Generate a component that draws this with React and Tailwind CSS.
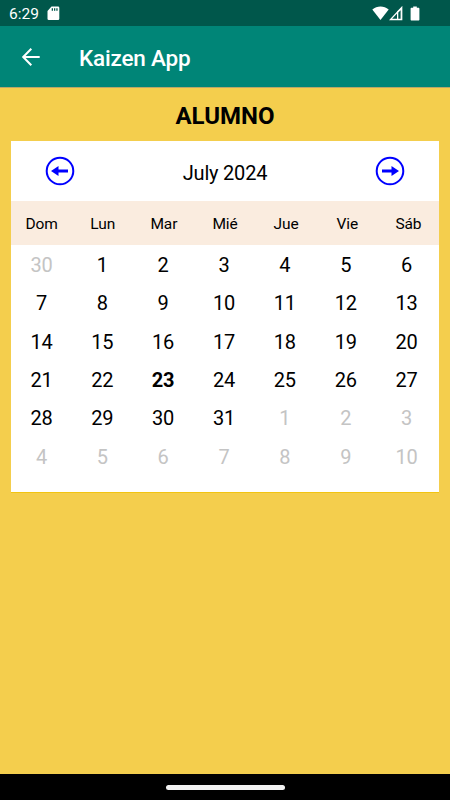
import React, { useState } from "react";

const weekDays = ["Dom", "Lun", "Mar", "Mié", "Jue", "Vie", "Sáb"];

const getMonthDays = (year, month) => {
  const firstWeekDay = new Date(year, month, 1).getDay();

  return Array.from({ length: 42 }, (_, index) => {
    const date = new Date(year, month, index - firstWeekDay + 1);
    return { number: date.getDate(), isOutside: date.getMonth() !== month };
  });
};

const StatusBar = () => {
  return (
    <div className="flex h-[26px] shrink-0 items-center bg-[#00574b] pl-[9px] pr-[30px] text-white">
      <p className="pt-[3px] text-[15.5px] leading-none">6:29</p>
      <svg className="ml-[8px] h-[15px] w-[13px]" viewBox="0 0 13 15" fill="currentColor">
        <path
          fillRule="evenodd"
          d="M4.5.5H11a1.3 1.3 0 0 1 1.3 1.3v11a1.3 1.3 0 0 1-1.3 1.3H1.8a1.3 1.3 0 0 1-1.3-1.3V5zM4.7 2.300v2.500H6V2.300zM7 2.300v2.500h1.300V2.300zM9.300 2.300v2.500h1.300V2.300z"
        />
      </svg>
      <div className="ml-auto flex items-center">
        <svg className="h-[15px] w-[17px]" viewBox="0 0 17 15" fill="currentColor">
          <path d="M.3 3.600C5-.4 12-.4 16.700 3.600L8.500 14z" />
        </svg>
        <svg className="h-[15px] w-[14px]" viewBox="0 0 14 15">
          <path d="M12.700 1.500v12H1.500z" fill="none" stroke="currentColor" strokeWidth="1.300" />
          <path d="M8 5.500l4.500-4V13.500H8z" fill="currentColor" />
          <path d="M9.300 6.500l2.300-2.300v8.600H9.300z" fill="#00574b" />
        </svg>
        <svg className="ml-[7px] h-[15px] w-[10px]" viewBox="0 0 10 15" fill="currentColor">
          <path d="M3.200.5h3.600v1.300h1.600c.6 0 1 .4 1 1v10.700c0 .6-.4 1-1 1H1.600c-.6 0-1-.4-1-1V2.800c0-.6.4-1 1-1h1.600z" />
        </svg>
      </div>
    </div>
  );
};

const AppBar = () => {
  return (
    <div className="flex h-[61px] shrink-0 items-center bg-[#008577] pl-[21px] text-white">
      <button aria-label="Atrás">
        <svg className="h-[20px] w-[20px]" viewBox="0 0 20 20" fill="none" stroke="currentColor" strokeWidth="2">
          <path d="M18.700 10H2.500M10.300 1.800L2.200 10l8.100 8.200" />
        </svg>
      </button>
      <h1 className="ml-[38px] pt-[3px] text-[22.5px] font-medium leading-none tracking-[-0.2px]">Kaizen App</h1>
    </div>
  );
};

const ArrowCircle = ({ isNext }) => {
  return (
    <svg className={isNext ? "h-[30px] w-[30px] rotate-180" : "h-[30px] w-[30px]"} viewBox="0 0 30 30">
      <circle cx="15" cy="15" r="13.300" fill="none" stroke="#0000ff" strokeWidth="2" />
      <path d="M6 15l7.500-5v3.600h9.500v2.800h-9.500V20z" fill="#0000ff" />
    </svg>
  );
};

const Calendar = () => {
  const [current, setCurrent] = useState(new Date(2024, 6, 1));

  const year = current.getFullYear();
  const month = current.getMonth();
  const title = current.toLocaleString("en-US", { month: "long", year: "numeric" });

  const changeMonth = (step) => {
    setCurrent(new Date(year, month + step, 1));
  };

  return (
    <div className="mx-[11px] h-[352px] border-b border-[#f2c411] bg-white text-black">
      <div className="flex h-[60px] items-center justify-between px-[34px]">
        <button aria-label="Mes anterior" onClick={() => changeMonth(-1)}>
          <ArrowCircle />
        </button>
        <p className="pt-[3px] text-[20px] font-[380] tracking-[-0.2px]">{title}</p>
        <button aria-label="Mes siguiente" onClick={() => changeMonth(1)}>
          <ArrowCircle isNext />
        </button>
      </div>
      <div className="grid h-[44px] grid-cols-7 items-center bg-[#faecdf] pt-[3px] text-center text-[15.5px] font-[380] tracking-[-0.1px]">
        {weekDays.map((day) => (
          <p key={day}>{day}</p>
        ))}
      </div>
      <div className="grid w-[426px] auto-rows-[38.3px] grid-cols-7 items-center pt-[1px] text-center text-[20px] font-[380] tracking-[-0.2px]">
        {getMonthDays(year, month).map((day, index) => {
          const isToday = !day.isOutside && day.number === 23 && month === 6 && year === 2024;

          return (
            <p key={index} className={isToday ? "font-bold" : day.isOutside ? "text-[#c4c4c4]" : ""}>
              {day.number}
            </p>
          );
        })}
      </div>
    </div>
  );
};

const App = () => {
  return (
    <div className="flex h-[800px] w-[450px] flex-col overflow-hidden bg-[#f4ce4d] font-[Roboto,sans-serif]">
      <StatusBar />
      <AppBar />
      <main className="grow border-t border-[#b9a669]">
        <h2 className="flex h-[53px] items-center justify-center pt-[3px] text-[24px] font-bold text-black">ALUMNO</h2>
        <Calendar />
      </main>
      <div className="flex h-[26px] shrink-0 items-center justify-center bg-black">
        <div className="h-[5px] w-[119px] rounded-full bg-[#f2f2f2]"></div>
      </div>
    </div>
  );
};

export default App;
